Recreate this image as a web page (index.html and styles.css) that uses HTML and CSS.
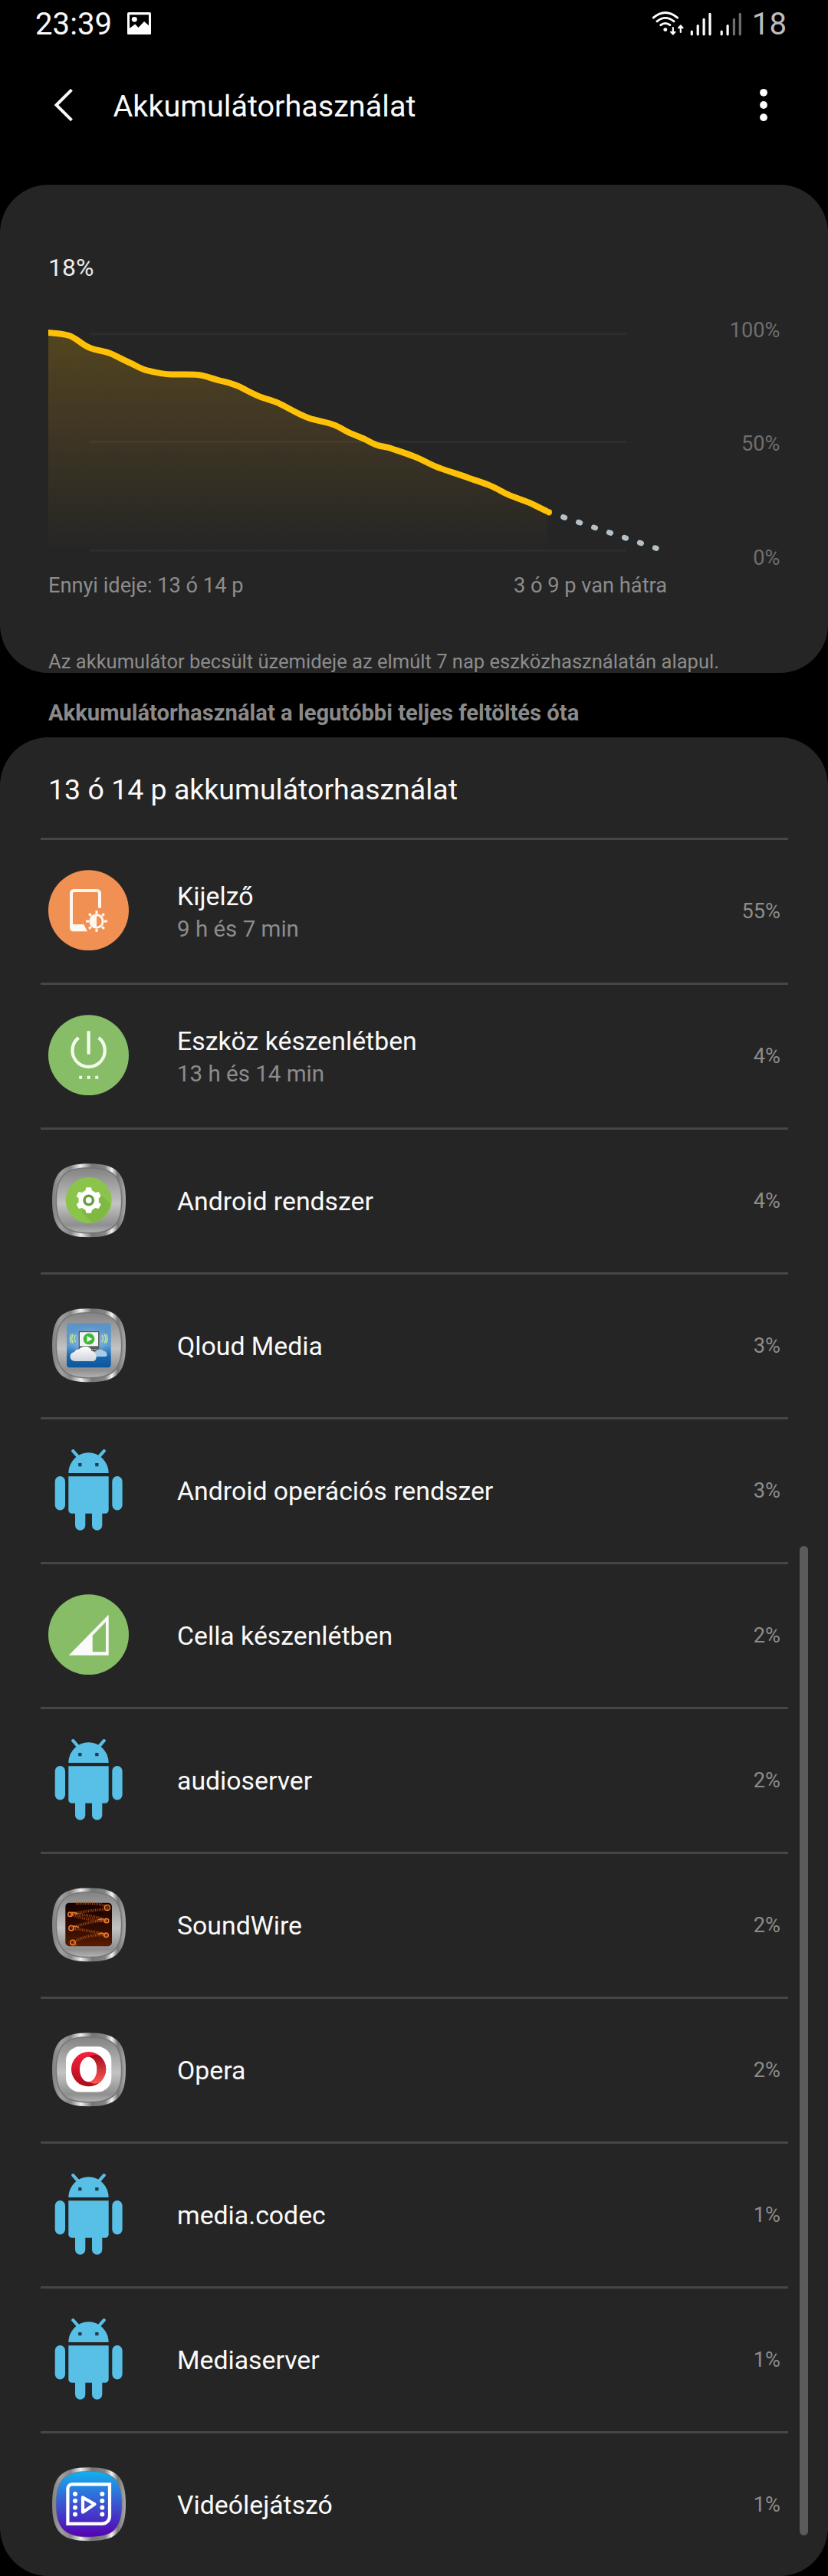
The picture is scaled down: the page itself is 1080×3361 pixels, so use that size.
FILE: index.html
```html
<!DOCTYPE html>
<html lang="hu">
<head>
<meta charset="utf-8">
<title>Akkumulátorhasználat</title>
<link rel="stylesheet" href="styles.css">
</head>
<body>
<svg class="defs" width="0" height="0" aria-hidden="true">
  <defs>
    <linearGradient id="rim" x1="0" y1="0" x2="1" y2="0">
      <stop offset="0" stop-color="#808080"/><stop offset=".12" stop-color="#a0a0a0"/><stop offset=".25" stop-color="#868686"/>
      <stop offset=".39" stop-color="#efefef"/><stop offset=".54" stop-color="#777"/><stop offset=".72" stop-color="#858585"/>
      <stop offset=".81" stop-color="#f4f4f4"/><stop offset=".89" stop-color="#777"/><stop offset="1" stop-color="#aaa"/>
    </linearGradient>
    <linearGradient id="steel" x1="0" y1="0" x2="0" y2="1">
      <stop offset="0" stop-color="#838383"/><stop offset=".25" stop-color="#a0a0a0"/><stop offset=".55" stop-color="#c3c3c3"/>
      <stop offset=".75" stop-color="#a2a2a2"/><stop offset=".88" stop-color="#8f8f8f"/><stop offset="1" stop-color="#b5b5b5"/>
    </linearGradient>
    <linearGradient id="sky" x1="0" y1="0" x2="0" y2="1">
      <stop offset="0" stop-color="#5c93c8"/><stop offset=".5" stop-color="#5b9bd2"/><stop offset=".75" stop-color="#1767ad"/><stop offset="1" stop-color="#0c569d"/>
    </linearGradient>
    <radialGradient id="glow"><stop offset="0" stop-color="#d3e9f7"/><stop offset="1" stop-color="#7fb3dd" stop-opacity="0"/></radialGradient>
    <linearGradient id="cloud" x1="0" y1="0" x2="0" y2="1"><stop offset="0" stop-color="#fff"/><stop offset="1" stop-color="#cfd3da"/></linearGradient>
    <linearGradient id="ember" x1="0" y1="0" x2="0" y2="1"><stop offset="0" stop-color="#150200"/><stop offset=".6" stop-color="#320c00"/><stop offset="1" stop-color="#5a1c00"/></linearGradient>
    <linearGradient id="red" x1="0" y1="0" x2="0" y2="1"><stop offset="0" stop-color="#f8233c"/><stop offset="1" stop-color="#ad0a1c"/></linearGradient>
    <linearGradient id="redlight" x1="0" y1="0" x2="0" y2="1"><stop offset="0" stop-color="#a00f1c"/><stop offset="1" stop-color="#ff5a55"/></linearGradient>
    <linearGradient id="violet" x1="0" y1="0" x2="0" y2="1"><stop offset="0" stop-color="#12b0ee"/><stop offset=".5" stop-color="#3b55d0"/><stop offset="1" stop-color="#5600b4"/></linearGradient>
    <symbol id="metal" viewBox="0 0 105 105">
      <path fill="url(#rim)" d="M53 5.3C89 5.3 101 17.3 101 53.3S89 101.3 53 101.3 5 89.3 5 53.3 17 5.3 53 5.3Z"/>
      <path fill="url(#steel)" stroke="#777" stroke-width="1.6" d="M53 10.8C84.500 10.8 95.700 21.800 95.700 53.300S84.500 95.800 53 95.800 10.300 84.800 10.300 53.300 21.500 10.800 53 10.800Z"/>
    </symbol>
    <symbol id="robot" viewBox="0 0 105 107">
      <g fill="#58bfe6">
        <path d="M26.300 31a26.200 26.700 0 0 1 52.400 0Z"/>
        <path d="M32.300 2.200l7 8M72.700 2.200l-7 8" stroke="#58bfe6" stroke-width="4.200" stroke-linecap="round"/>
        <path d="M26.300 35.300h52.400v44a4.500 4.500 0 0 1-4.500 4.500H30.800a4.500 4.500 0 0 1-4.500-4.500Z"/>
        <rect x="8.700" y="35" width="13.300" height="44.500" rx="6.650"/><rect x="83.300" y="35" width="13.300" height="44.500" rx="6.650"/>
        <rect x="35" y="70" width="13.300" height="35.700" rx="6.650"/><rect x="57" y="70" width="13.300" height="35.700" rx="6.650"/>
      </g>
      <path fill="#1d3f4b" d="M39.200 17.900h4.300v4.300h-4.300zM61.200 17.900h4.300v4.300h-4.300z"/>
    </symbol>
  </defs>
</svg>

<header class="status">
  <span class="clock">23:39</span>
  <svg class="status-image" viewBox="0 0 31 31" width="31" height="29.500" preserveAspectRatio="none">
    <path fill="#fff" fill-rule="evenodd" d="M2 0h27a2 2 0 0 1 2 2v27a2 2 0 0 1-2 2H2a2 2 0 0 1-2-2V2a2 2 0 0 1 2-2ZM3 3.300V22l7.200-5.600 4.300 4.600L22 12.500l6 5.500V3.300Z"/>
    <circle cx="9.300" cy="9.800" r="3.500" fill="#fff"/>
  </svg>
  <svg class="signals" viewBox="848 10 122 44" width="122" height="42.600" preserveAspectRatio="none" fill="none" stroke="#fff" stroke-linecap="round">
    <g stroke-width="2.900">
      <path d="M852.200 23.600Q867.800 9.800 883.600 23.600M857 28.400Q867.800 19.200 879 28.400M861.800 33.400Q867.800 28.600 873.900 33.400"/>
      <circle cx="867.800" cy="39.600" r="2.500" fill="#fff" stroke="none"/>
    </g>
    <path stroke-width="2.200" d="M877.800 37v8M887.800 43v-8"/>
    <path fill="#fff" stroke-width="1.400" stroke-linejoin="round" d="M874.600 42.600h6.400l-3.200 3.700ZM884.600 37.400h6.400l-3.200-3.700Z"/>
    <path stroke-width="3.200" d="M902.300 42.200v3.800M910.200 34.300V46M918.100 25.700V46M926 18.500V46M941.200 42.200v3.800M949.100 34.300V46"/>
    <path stroke-width="3.200" stroke="#6e6e6e" d="M957.400 25.700V46M965.300 18.500V46"/>
  </svg>
  <span class="battery">18</span>
</header>

<nav class="appbar">
  <svg viewBox="0 0 26 44" width="26" height="44"><path d="M23.500 2.200 3.500 22l20 19.800" fill="none" stroke="#fafafa" stroke-width="4"/></svg>
  <h1 class="title">Akkumulátorhasználat</h1>
  <svg class="more" viewBox="0 0 10 44" width="10" height="44" fill="#fff"><circle cx="5" cy="5.800" r="4.900"/><circle cx="5" cy="22" r="4.900"/><circle cx="5" cy="38.200" r="4.900"/></svg>
</nav>

<section class="card chart-card">
  <div class="level">18%</div>
  <div class="chart">
    <svg class="plot" viewBox="63 400 820 326" width="820" height="338" preserveAspectRatio="none">
      <defs>
        <linearGradient id="area" gradientUnits="userSpaceOnUse" x1="0" y1="427" x2="0" y2="701">
          <stop offset="0" stop-color="#ffc107" stop-opacity=".21"/><stop offset=".5" stop-color="#ffb020" stop-opacity=".11"/><stop offset="1" stop-color="#ffc107" stop-opacity="0"/>
        </linearGradient>
      </defs>
      <path stroke="#2d2d2d" stroke-width="3" d="M116.500 428.700h701M116.500 564.500h701M116.500 701h701"/>
      <path fill="url(#area)" d="M63 427L91.300 431.500 117 446.600 141.200 451.800 165.300 463.100 191.100 474.200 223.800 479.300 258.300 480 285.800 487.200 309.900 494.100 337.500 506.900 361.600 514.800 402.900 534.400 437.300 543.700 458 554 475.200 560.900 492.400 568.500 509.600 572.300 540 582.600 574.400 597.400 608.900 609.100 639.900 619.800 664 631.200 691.500 641.500 714 652.500V701H63Z"/>
      <path class="curve" fill="none" stroke="#ffc107" stroke-width="8" stroke-linejoin="round" d="M62 426.900Q86 428.500 93 431.800C104 437 108 443 119 446.800C128 450 136 450 144 453.200C152 456.500 158 460 166 463.400C176 467.500 184 473 192 474.600C202 477 212 479.300 224 479.600C236 479.600 246 479 258 480C268 481 278 485.500 287 487.400C296 489 303 491 311 494.500C320 498.500 329 503.800 338 507.200C346 510.500 354 511.800 362 515.200C376 521.500 389 530 403 534.600C414 538.500 426 539 437 543.600C444 546.500 451 551 458 554C464 556.500 470 558.500 476 561.200C482 564 487 567.500 493 568.900C499 570.600 504 570.600 510 572.600C520 576 530 579 540 582.800C552 587 562 594 574 597.600C586 602 598 605 609 609C620 613 630 615.500 640 619.800C648 623 656 628 664 631.400C673 635 682 637.500 692 641.600C699 645 706 648.500 714 652.100"/>
      <circle cx="716" cy="653" r="4" fill="#ffc107"/>
      <path class="curve" fill="none" stroke="#b4c1c8" stroke-width="7" stroke-linecap="round" stroke-dasharray="2.200 18.850" d="M734.600 659.100 856.100 698.400"/>
    </svg>
    <div class="axis"><span>100%</span><span>50%</span><span>0%</span></div>
  </div>
  <div class="captions"><span>Ennyi ideje: 13 ó 14 p</span><span>3 ó 9 p van hátra</span></div>
  <p class="note">Az akkumulátor becsült üzemideje az elmúlt 7 nap eszközhasználatán alapul.</p>
</section>

<h2 class="section-title">Akkumulátorhasználat a legutóbbi teljes feltöltés óta</h2>

<section class="card list-card">
  <h3 class="list-title">13 ó 14 p akkumulátorhasználat</h3>
  <ul class="apps">
    <li class="app detailed">
      <svg class="icon" viewBox="0 0 105 105"><circle cx="52.500" cy="52.700" r="52.500" fill="#f09052"/>
        <path fill="none" stroke="#fff8f0" stroke-width="4" d="M67 49.700V30.500a3.500 3.500 0 0 0-3.500-3.500h-30a3.500 3.500 0 0 0-3.500 3.500V75"/>
        <path fill="#fff8f0" d="M28 71h18.300l4.600 9.300H32.500a4.500 4.500 0 0 1-4.500-4.500Z"/>
        <circle cx="63" cy="67" r="8.200" fill="none" stroke="#fff8f0" stroke-width="3"/><path fill="#fff8f0" d="M63 58.500v17a8.500 8.500 0 0 1 0-17Z"/>
        <path stroke="#fff8f0" stroke-width="3" d="M63 57v-4M63 81v-4M73 67h4M49 67h4M70.100 59.900l2.800-2.800M53.100 76.900l2.800-2.800M70.100 74.100l2.800 2.800M53.100 57.100l2.800 2.800"/></svg>
      <div class="text"><span class="name">Kijelző</span><span class="detail">9 h és 7 min</span></div><span class="share">55%</span>
    </li>
    <li class="app detailed">
      <svg class="icon" viewBox="0 0 105 105"><circle cx="52.500" cy="52.700" r="52.500" fill="#87bd67"/>
        <path fill="none" stroke="#f4fdec" stroke-width="4.200" d="M39.500 30a21.200 21.200 0 1 0 26.200 0M52.600 21.300v30.200"/>
        <path fill="#f4fdec" d="M40.200 79.800h3.900v3.900h-3.900zM50.700 79.800h3.900v3.900h-3.900zM61.300 79.800h3.900v3.900h-3.900z"/></svg>
      <div class="text"><span class="name">Eszköz készenlétben</span><span class="detail">13 h és 14 min</span></div><span class="share">4%</span>
    </li>
    <li class="app">
      <svg class="icon" viewBox="0 0 105 105"><use href="#metal"/><circle cx="52.700" cy="53" r="30" fill="#8bc44a"/>
        <path fill="#7fb843" d="M66 43 80.500 57.500A30 30 0 0 1 57 82.500L43 68Z"/>
        <circle cx="52.700" cy="53" r="13.200" fill="#fff"/>
        <g fill="#fff"><path id="cog" d="M49.500 36.300h6.400l1.800 6.200h-10zM49.500 69.700h6.400l1.800-6.200h-10z"/><use href="#cog" transform="rotate(60 52.700 53)"/><use href="#cog" transform="rotate(120 52.700 53)"/></g>
        <circle cx="52.700" cy="53" r="5.700" fill="none" stroke="#6a9e3e" stroke-width="3.600"/></svg>
      <div class="text"><span class="name">Android rendszer</span></div><span class="share">4%</span>
    </li>
    <li class="app">
      <svg class="icon" viewBox="0 0 105 105"><use href="#metal"/>
        <rect x="24" y="24.300" width="57.700" height="58" rx="4" fill="url(#sky)"/><ellipse cx="53" cy="48" rx="28" ry="20" fill="url(#glow)"/>
        <rect x="40.300" y="35.500" width="25.500" height="19.500" fill="#f3f5f5" stroke="#555" stroke-width="1.400"/>
        <path fill="#5c5650" d="M40 56h26l1.500 5H38.500z"/><path stroke="#bdb4a8" stroke-width="1" stroke-dasharray="2 1" d="M42 58.500h22"/>
        <circle cx="53" cy="44.900" r="7.400" fill="#3fb83a"/><path fill="#fff" d="M50.500 40.900v8l6.700-4z"/>
        <path fill="none" stroke="#c7e59a" stroke-width="1.500" d="M35.500 40q-3 4.500 0 9M32.500 38.500q-3.500 6 0 12M30 38.500q-3 6 0 12M70 40q3 4.500 0 9M73 38.500q3.500 6 0 12M75.500 38.500q3 6 0 12"/>
        <path fill="#a9cbe8" d="M58 68a5 5 0 0 1 3-6 7 7 0 0 1 11-1.500q4 .5 4 3.500a2.500 2.500 0 0 1-1 4z"/>
        <path fill="url(#cloud)" d="M35 74a6 6 0 0 1-1-12q2-4 6-3.500 3-4 9-3.500 6 0 7.500 5.500 5 1 5.500 5.500a5.500 5.500 0 0 1-3 8z"/></svg>
      <div class="text"><span class="name">Qloud Media</span></div><span class="share">3%</span>
    </li>
    <li class="app">
      <svg class="icon robot" viewBox="0 0 105 107"><use href="#robot"/></svg>
      <div class="text"><span class="name">Android operációs rendszer</span></div><span class="share">3%</span>
    </li>
    <li class="app">
      <svg class="icon" viewBox="0 0 105 105"><circle cx="52.500" cy="52.700" r="52.500" fill="#87bd67"/>
        <path fill="#fafafa" fill-rule="evenodd" d="M78.700 26.700v53H26.700ZM75 36 57.700 54v21.300H75Z"/></svg>
      <div class="text"><span class="name">Cella készenlétben</span></div><span class="share">2%</span>
    </li>
    <li class="app">
      <svg class="icon robot" viewBox="0 0 105 107"><use href="#robot"/></svg>
      <div class="text"><span class="name">audioserver</span></div><span class="share">2%</span>
    </li>
    <li class="app">
      <svg class="icon" viewBox="0 0 105 105"><use href="#metal"/><rect x="22.300" y="24.700" width="60.700" height="56.500" rx="5" fill="url(#ember)"/>
        <g fill="none" stroke="#a84a14">
          <path stroke-width="3.600" stroke-dasharray="1 1.300" d="M36 25.500q20-1 32 1.500t9 6Q55 34 28 39.500q20-1 49 8Q50 49 30 58q20 2 46 8.500Q46 66 32 77l6 3.500"/>
          <path stroke-width="4" stroke-dasharray="1 1.500" d="M30 40q22 8 46 8"/>
        </g>
        <g fill="none" stroke="#ec8030" stroke-width="1.500">
          <circle cx="77" cy="31" r="3.600"/><circle cx="28.500" cy="39.700" r="2.800"/><circle cx="76" cy="48" r="2.800"/><circle cx="30" cy="57.700" r="3.200"/><circle cx="75.500" cy="66.700" r="2.800"/><circle cx="32" cy="76.500" r="3.200"/>
          <path d="M31 37.500q4-1 7 2M72 46q-4-1-7 1M33 55q4 0 7 2M72 64.500q-4-1-7 1"/>
        </g></svg>
      <div class="text"><span class="name">SoundWire</span></div><span class="share">2%</span>
    </li>
    <li class="app">
      <svg class="icon" viewBox="0 0 105 105"><use href="#metal"/><rect x="23" y="23.300" width="59.300" height="59.300" rx="18" fill="#fff"/>
        <path fill="url(#red)" fill-rule="evenodd" d="M52.600 30a22.650 22.650 0 1 0 0 45.300 22.650 22.650 0 1 0 0-45.300ZM52.300 36.700a11.300 16.300 0 1 1 0 32.600 11.300 16.300 0 1 1 0-32.600Z"/>
        <path fill="url(#redlight)" d="M52.300 36.700q8-5 15.400-.9a22.650 22.650 0 0 1 0 33.700q-7 4.600-15.400-.2c15 0 15-32.600 0-32.600Z"/></svg>
      <div class="text"><span class="name">Opera</span></div><span class="share">2%</span>
    </li>
    <li class="app">
      <svg class="icon robot" viewBox="0 0 105 107"><use href="#robot"/></svg>
      <div class="text"><span class="name">media.codec</span></div><span class="share">1%</span>
    </li>
    <li class="app">
      <svg class="icon robot" viewBox="0 0 105 107"><use href="#robot"/></svg>
      <div class="text"><span class="name">Mediaserver</span></div><span class="share">1%</span>
    </li>
    <li class="app">
      <svg class="icon" viewBox="0 0 105 105"><use href="#metal"/>
        <path fill="url(#violet)" d="M53 10.800C84.500 10.800 95.700 21.800 95.700 53.300S84.500 95.800 53 95.800 10.300 84.800 10.300 53.300 21.500 10.800 53 10.800Z"/>
        <path fill="none" stroke="#fff" stroke-width="4.200" d="M31 27.400h49v41.500a10 10 0 0 1-10 10H25.400V33a5.600 5.600 0 0 1 5.600-5.600Z"/>
        <path fill="none" stroke="#fff" stroke-width="4.200" stroke-linejoin="round" d="M45 44.500v19.200l15.500-10.400Z"/>
        <g fill="#fff"><circle cx="35" cy="40" r="3"/><circle cx="35" cy="49" r="3"/><circle cx="35" cy="57.700" r="3"/><circle cx="35" cy="66.400" r="3"/><circle cx="70.300" cy="40" r="3"/><circle cx="70.300" cy="49" r="3"/><circle cx="70.300" cy="57.700" r="3"/><circle cx="70.300" cy="66.400" r="3"/></g></svg>
      <div class="text"><span class="name">Videólejátszó</span></div><span class="share">1%</span>
    </li>
  </ul>
  <div class="scrollbar"></div>
</section>
</body>
</html>
```
FILE: styles.css
```css
* {
  box-sizing: border-box;
  margin: 0;
  padding: 0;
}

body {
  width: 1080px;
  background: #000;
  color: #fafafa;
  font-family: Roboto, sans-serif;
  font-weight: 400;
}

svg {
  display: block;
  flex: none;
}

.defs {
  position: absolute;
}

.status {
  display: flex;
  align-items: center;
  height: 64px;
  padding: 0 54px 0 46px;
  font-size: 40.2px;
  line-height: 48px;
}

.status-image {
  margin: 0 0 2.600px 20px;
}

.signals {
  margin: 0 10.500px 2px auto;
}

.battery {
  color: #bdbdbd;
}

.appbar {
  display: flex;
  align-items: center;
  height: 145px;
  margin-bottom: 32px;
  padding: 0 79px 0 70px;
}

.title {
  margin-left: 51.500px;
  padding-top: 4.600px;
  font-size: 39.6px;
  font-weight: 400;
  line-height: 48px;
}

.more {
  margin-left: auto;
}

.card {
  background: #252525;
  border-radius: 63px;
}

.chart-card {
  height: 637px;
  padding: 87.500px 62.500px 0 63px;
  color: #8c8c8c;
  font-size: 27.2px;
  line-height: 32px;
}

.level {
  color: #ececec;
  font-size: 32px;
  line-height: 40px;
}

.chart {
  display: flex;
  justify-content: space-between;
  margin-top: 37.500px;
}

.curve {
  vector-effect: non-scaling-stroke;
}

.axis {
  display: flex;
  flex-direction: column;
  justify-content: space-between;
  padding-top: 8.700px;
  color: #6e6e6e;
  text-align: right;
}

.captions {
  display: flex;
  justify-content: space-between;
  width: 807px;
  margin-top: 4px;
}

.note {
  margin-top: 66.500px;
  font-size: 25.550px;
  white-space: nowrap;
}

.section-title {
  height: 84px;
  padding: 32px 63px 0;
  color: #8a8a8a;
  font-size: 29.2px;
  font-weight: 700;
  line-height: 40px;
}

.list-card {
  position: relative;
  height: 2399px;
}

.list-title {
  height: 131px;
  padding: 44px 63px 0;
  font-size: 37.5px;
  font-weight: 400;
  line-height: 48px;
}

.apps {
  margin: 0 52px 0 53px;
  list-style: none;
}

.app {
  display: flex;
  align-items: center;
  height: 189px;
  padding: 0 10px;
  border-top: 3px solid #464646;
}

.icon {
  width: 105px;
  height: 105px;
  margin-bottom: 3px;
}

.icon.robot {
  height: 107px;
  margin-bottom: 1px;
}

.text {
  display: flex;
  flex: 1;
  flex-direction: column;
  margin-left: 63px;
  line-height: 43px;
}

.detailed .text {
  padding-top: 4px;
}

.name {
  font-size: 33.800px;
}

.detail {
  color: #8c8c8c;
  font-size: 29.500px;
}

.share {
  color: #8c8c8c;
  font-size: 27.200px;
  line-height: 32px;
}

.scrollbar {
  position: absolute;
  top: 1055px;
  right: 26px;
  width: 11px;
  height: 1291px;
  border-radius: 6px;
  background: #5b5b5b;
}
```
